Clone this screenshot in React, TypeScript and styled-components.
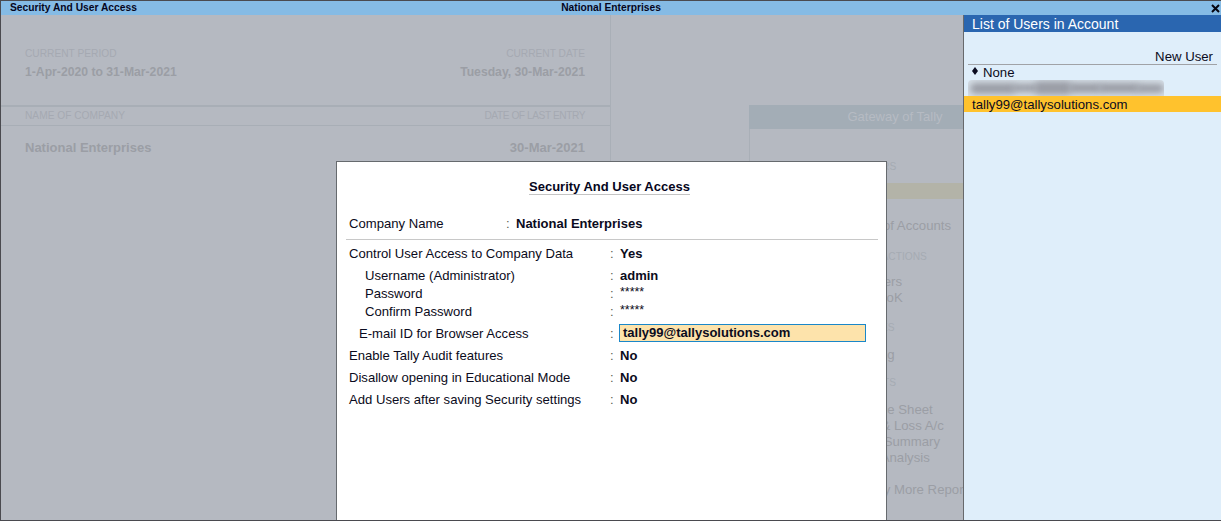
import React from "react";
import styled, { createGlobalStyle } from "styled-components";

const Global = createGlobalStyle`
  html, body { margin: 0; padding: 0; background: #b5b9c1; }
  body { font-family: "Liberation Sans", Arial, sans-serif; font-size: 13.1px; color: #0b0b20; }
  * { box-sizing: border-box; }
`;

const Frame = styled.div`
  width: 1221px; height: 521px; display: flex; flex-direction: column; overflow: hidden;
  border-top: 1px solid #4a4a4f; border-left: 1px solid #4a4a4f; border-bottom: 1px solid #4a4a4f;
`;
const TitleBar = styled.header`
  height: 14px; flex: none; background: #85bbe5; display: grid; grid-template-columns: 1fr auto 1fr;
  align-items: center; padding: 0 9px; font: bold 10.25px/14px "Liberation Sans", sans-serif; color: #06061c;
`;
const CloseBox = styled.span` justify-self: end; display: flex; margin-right: -8px; `;
const Content = styled.div` flex: 1; display: flex; min-height: 0; `;
const Backdrop = styled.main` position: relative; width: 962px; flex: none; display: flex; overflow: hidden; background: #b5b9c1; `;
const LeftPane = styled.section` width: 610px; flex: none; border-right: 1px solid #a9afb7; `;
const InfoGrid = styled.div`
  display: grid; grid-template-columns: 1fr auto; padding: 32px 25px 0 24px; height: 92px; border-bottom: 2px solid #a8aeb6;
`;
const Caption = styled.div<{ $right?: boolean; $tight?: boolean }>`
  font-size: 10.2px; line-height: 13px; color: #a5a9b2; text-align: ${p => (p.$right ? "right" : "left")};
  letter-spacing: ${p => (p.$tight ? "-0.45px" : "0")};
`;
const InfoValue = styled.div<{ $right?: boolean }>`
  font: bold 12.2px/14px "Liberation Sans", sans-serif; color: #9b9ea5; margin-top: 5px; text-align: ${p => (p.$right ? "right" : "left")};
`;
const HeadRow = styled.div`
  display: flex; justify-content: space-between; height: 19px; align-items: center; padding: 0 25px 2px 24px; border-bottom: 1px solid #a8aeb6;
`;
const CompanyRow = styled.div`
  display: flex; justify-content: space-between; padding: 14px 25px 0 24px; font: bold 13px/16px "Liberation Sans", sans-serif; color: #9b9ea5;
`;
const Gateway = styled.section`
  width: 214px; margin: 90px 0 0 138px; flex: none; border-left: 1px solid #a9afb7; display: flex; flex-direction: column; height: 420px; white-space: nowrap;
`;
const GatewayHead = styled.div`
  height: 24px; margin-left: -1px; background: #a3adb6; color: #b6bbc3; font-size: 13px; line-height: 24px; text-align: center; padding-left: 78px; flex: none;
`;
const GatewayBody = styled.div` padding-left: 97px; display: flex; flex-direction: column; `;
const GroupHead = styled.div<{ $top: number }>` font-size: 10.2px; line-height: 16px; color: #a5abb3; margin-top: ${p => p.$top}px; `;
const Selected = styled.div`
  height: 16px; margin: 8px 0 0 -97px; background: #b3b3a8; flex: none;
`;
const GatewayItem = styled.div<{ $top?: number }>` font-size: 13.2px; line-height: 16px; color: #9b9ea5; margin-top: ${p => p.$top ?? 0}px; `;
const Dialog = styled.section`
  position: absolute; left: 335px; top: 146px; width: 551px; height: 370px; background: #fff; border: 1px solid #666a6e; padding: 17px 8px 0 9px;
`;
const DialogTitle = styled.h1`
  margin: 0 0 0 183px; width: max-content; font: bold 13px/15px "Liberation Sans", sans-serif; color: #06061c; padding: 0; border-bottom: 1px solid #c4c4c4;
`;
const CompanyLine = styled.div`
  display: flex; align-items: center; height: 42px; margin-top: 3px; padding: 18px 0 9px 3px; border-bottom: 1px solid #c8c8c8;
`;
const Label = styled.span<{ $indent?: number; $w: number }>` width: ${p => p.$w}px; padding-left: ${p => p.$indent ?? 0}px; flex: none; `;
const Colon = styled.span` color: #5f5f55; width: 10px; flex: none; `;
const Strong = styled.span` font-weight: bold; font-size: 13px; `;
const Rows = styled.div` display: flex; flex-direction: column; padding: 4px 0 0 3px; `;
const Row = styled.div<{ $gap: number }>` display: flex; align-items: center; height: 18px; margin-top: ${p => p.$gap}px; `;
const Stars = styled.span` font: 12.4px/12px "Liberation Sans", sans-serif; margin-bottom: 3px; `;
const EmailField = styled.div`
  width: 247px; height: 18px; margin-left: -1px; background: #fde3ab; border: 1px solid #1a87c9; font-weight: bold; font-size: 13px; line-height: 16px; padding-left: 3px;
`;
const Side = styled.aside`
  width: 258px; flex: none; background: #dfeefa; border-left: 1px solid #67696c; display: flex; flex-direction: column; font-size: 13.2px;
`;
const SideTitle = styled.div` height: 17px; background: #2a66b0; color: #fff; font-size: 14px; line-height: 18px; padding-left: 8px; flex: none; `;
const NewUser = styled.div`
  margin: 16px 4px 0 4px; height: 17px; text-align: right; line-height: 18px; padding-right: 4px; border-bottom: 1px solid #a0a2a6;
`;
const NoneRow = styled.div` display: flex; height: 15px; align-items: center; padding-left: 8px; line-height: 15px; gap: 5px; `;
const DiamondMark = styled.svg` margin-bottom: 3px; flex: none; `;
const Obscured = styled.div`
  height: 16px; width: 196px; margin-left: 4px; background: #d6dfe7; border-radius: 4px 4px 0 0; overflow: hidden; padding: 0 2px; display: flex; align-items: center;
`;
const Smear = styled.span<{ $w: number; $h: number }>`
  width: ${p => p.$w}px; height: ${p => p.$h}px; margin-right: -4px; border-radius: 6px; background: #9a9da6; filter: blur(3px); flex: none;
`;
const UserRow = styled.div` height: 16px; background: #ffc22d; padding-left: 8px; line-height: 17px; `;

const Close = () => (
  <svg width="9" height="9" viewBox="0 0 9 9"><path d="M1 1l7 7M8 1L1 8" stroke="#050510" strokeWidth="2" /></svg>
);
const Diamond = () => (
  <DiamondMark width="6" height="8" viewBox="0 0 6 8"><path d="M3 0l3 4-3 4-3-4z" fill="#0b0b20" /></DiamondMark>
);

const rows: { label: string; value: React.ReactNode; gap: number; indent?: number }[] = [
  { label: "Control User Access to Company Data", value: <Strong>Yes</Strong>, gap: 0 },
  { label: "Username (Administrator)", value: <Strong>admin</Strong>, gap: 4, indent: 16 },
  { label: "Password", value: <Stars>*****</Stars>, gap: 0, indent: 16 },
  { label: "Confirm Password", value: <Stars>*****</Stars>, gap: 0, indent: 16 },
  { label: "E-mail ID for Browser Access", value: <EmailField>tally99@tallysolutions.com</EmailField>, gap: 4, indent: 10 },
  { label: "Enable Tally Audit features", value: <Strong>No</Strong>, gap: 4 },
  { label: "Disallow opening in Educational Mode", value: <Strong>No</Strong>, gap: 4 },
  { label: "Add Users after saving Security settings", value: <Strong>No</Strong>, gap: 4 },
];

const smears = [
  { w: 46, h: 11 }, { w: 26, h: 8 }, { w: 38, h: 14 }, { w: 34, h: 10 }, { w: 42, h: 10 }, { w: 28, h: 9 },
];

export default function App() {
  return (
    <Frame>
      <Global />
      <TitleBar>
        <span>Security And User Access</span>
        <span>National Enterprises</span>
        <CloseBox><Close /></CloseBox>
      </TitleBar>
      <Content>
        <Backdrop>
          <LeftPane>
            <InfoGrid>
              <div>
                <Caption>CURRENT PERIOD</Caption>
                <InfoValue>1-Apr-2020 to 31-Mar-2021</InfoValue>
              </div>
              <div>
                <Caption $right>CURRENT DATE</Caption>
                <InfoValue $right>Tuesday, 30-Mar-2021</InfoValue>
              </div>
            </InfoGrid>
            <HeadRow>
              <Caption>NAME OF COMPANY</Caption>
              <Caption $right $tight>DATE OF LAST ENTRY</Caption>
            </HeadRow>
            <CompanyRow>
              <span>National Enterprises</span>
              <span>30-Mar-2021</span>
            </CompanyRow>
          </LeftPane>
          <Gateway>
            <GatewayHead>Gateway of Tally</GatewayHead>
            <GatewayBody>
              <GroupHead $top={30}>MASTERS</GroupHead>
              <Selected />
              <GatewayItem $top={19}>Chart of Accounts</GatewayItem>
              <GroupHead $top={15}>TRANSACTIONS</GroupHead>
              <GatewayItem $top={9}>Vouchers</GatewayItem>
              <GatewayItem>DayBooK</GatewayItem>
              <GroupHead $top={14}>UTILITIES</GroupHead>
              <GatewayItem $top={11}>Banking</GatewayItem>
              <GroupHead $top={12}>REPORTS</GroupHead>
              <GatewayItem $top={11}>Balance Sheet</GatewayItem>
              <GatewayItem>Profit &amp; Loss A/c</GatewayItem>
              <GatewayItem>Stock Summary</GatewayItem>
              <GatewayItem>Ratio Analysis</GatewayItem>
              <GatewayItem $top={16}>Display More Reports</GatewayItem>
            </GatewayBody>
          </Gateway>
          <Dialog>
            <DialogTitle>Security And User Access</DialogTitle>
            <CompanyLine>
              <Label $w={157}>Company Name</Label>
              <Colon>:</Colon>
              <Strong>National Enterprises</Strong>
            </CompanyLine>
            <Rows>
              {rows.map(r => (
                <Row key={r.label} $gap={r.gap}>
                  <Label $w={261} $indent={r.indent}>{r.label}</Label>
                  <Colon>:</Colon>
                  {r.value}
                </Row>
              ))}
            </Rows>
          </Dialog>
        </Backdrop>
        <Side>
          <SideTitle>List of Users in Account</SideTitle>
          <NewUser>New User</NewUser>
          <NoneRow><Diamond />None</NoneRow>
          <Obscured>
            {smears.map((s, i) => <Smear key={i} $w={s.w} $h={s.h} />)}
          </Obscured>
          <UserRow>tally99@tallysolutions.com</UserRow>
        </Side>
      </Content>
    </Frame>
  );
}
